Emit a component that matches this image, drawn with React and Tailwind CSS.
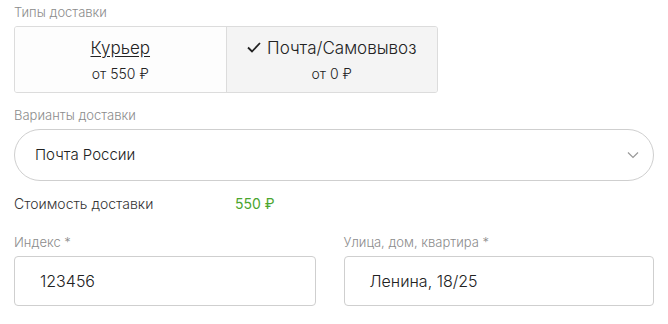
import React from 'react';

const font = { fontFamily: 'Inter, "Noto Sans", sans-serif' };

const App = () => {
  return (
    <div className="w-[668px] h-[324px] bg-white px-[14px] pt-[4px] text-[#222] font-light" style={font}>
      <div className="text-[13px] leading-[16px] text-[#8c8c8c]">Типы доставки</div>
      <div className="mt-[6px] flex w-[424px] h-[67px] border border-[#dcdcdc] rounded-[3px] overflow-hidden">
        <button className="flex-1 flex flex-col items-center justify-center bg-[#fdfdfd]">
          <span className="text-[17px] leading-[20px] underline underline-offset-[2px]">Курьер</span>
          <span className="mt-[7px] text-[14px] leading-[17px]">от 550 ₽</span>
        </button>
        <button className="flex-1 flex flex-col items-center justify-center bg-[#f4f4f4] border-l border-[#dcdcdc]">
          <span className="flex items-center gap-[6px] text-[17px] leading-[20px]">
            <svg width="14" height="11" viewBox="0 0 14 11" fill="none" stroke="#222" strokeWidth="1.8">
              <path d="M1 5.5l4 4 8-8.5" />
            </svg>
            Почта/Самовывоз
          </span>
          <span className="mt-[7px] text-[14px] leading-[17px]">от 0 ₽</span>
        </button>
      </div>

      <div className="mt-[14px] text-[13px] leading-[16px] text-[#8c8c8c]">Варианты доставки</div>
      <div className="mt-[6px] flex items-center justify-between w-[640px] h-[52px] border border-[#cfcfcf] rounded-full pl-[20px] pr-[14px]">
        <span className="text-[15px]">Почта России</span>
        <svg width="12" height="8" viewBox="0 0 12 8" fill="none" stroke="#999" strokeWidth="1.2">
          <path d="M1 1.5l5 5 5-5" />
        </svg>
      </div>

      <div className="mt-[13px] flex items-center text-[14px] leading-[20px]">
        <span className="w-[221px] text-[#333]">Стоимость доставки</span>
        <span className="text-[#4aa52e] font-normal">550 ₽</span>
      </div>

      <div className="mt-[20px] flex gap-[28px]">
        <div className="w-[302px]">
          <div className="text-[13px] leading-[16px] text-[#8c8c8c]">Индекс *</div>
          <div className="mt-[6px] h-[50px] border border-[#cfcfcf] rounded-[4px] flex items-center pl-[25px] text-[16px]">123456</div>
        </div>
        <div className="w-[311px]">
          <div className="text-[13px] leading-[16px] text-[#8c8c8c]">Улица, дом, квартира *</div>
          <div className="mt-[6px] h-[50px] border border-[#cfcfcf] rounded-[4px] flex items-center pl-[25px] text-[16px]">Ленина, 18/25</div>
        </div>
      </div>
    </div>
  );
};

export default App;
